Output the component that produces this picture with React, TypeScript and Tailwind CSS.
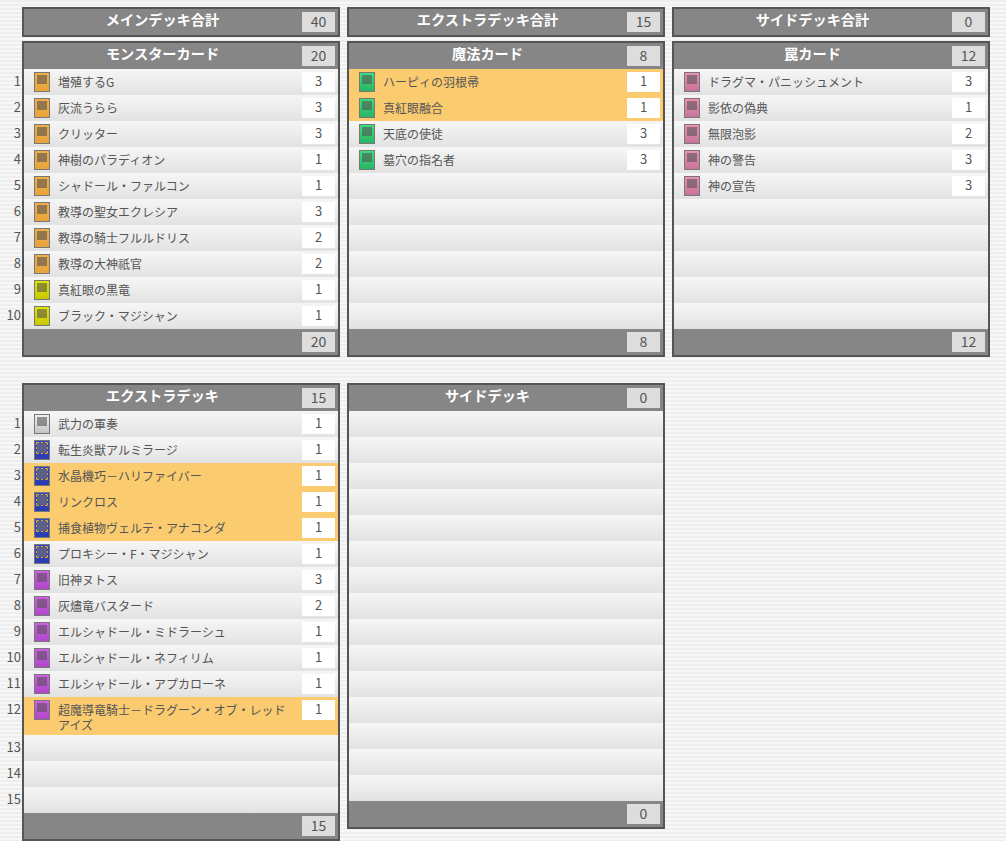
type CardKind = "effect" | "normal" | "spell" | "trap" | "token" | "link" | "fusion";

type Card = {
  name: string;
  count: number;
  kind: CardKind;
  limited?: boolean;
};

const kindStyles: Record<CardKind, string> = {
  effect: "bg-gradient-to-b from-[#f0ae48] to-[#e8a33c]",
  normal: "bg-gradient-to-b from-[#e4e400] to-[#c8c800]",
  spell: "bg-gradient-to-b from-[#3ddc7c] to-[#2ab565]",
  trap: "bg-gradient-to-b from-[#ee8fb4] to-[#c7749a]",
  token: "bg-gradient-to-b from-[#f2f2f2] to-[#c4c4c4]",
  link: "bg-gradient-to-b from-[#3548c4] to-[#2b3cae]",
  fusion: "bg-gradient-to-b from-[#cf5fe6] to-[#b048c8]",
};

const monsters: Card[] = [
  { name: "増殖するG", count: 3, kind: "effect" },
  { name: "灰流うらら", count: 3, kind: "effect" },
  { name: "クリッター", count: 3, kind: "effect" },
  { name: "神樹のパラディオン", count: 1, kind: "effect" },
  { name: "シャドール・ファルコン", count: 1, kind: "effect" },
  { name: "教導の聖女エクレシア", count: 3, kind: "effect" },
  { name: "教導の騎士フルルドリス", count: 2, kind: "effect" },
  { name: "教導の大神祇官", count: 2, kind: "effect" },
  { name: "真紅眼の黒竜", count: 1, kind: "normal" },
  { name: "ブラック・マジシャン", count: 1, kind: "normal" },
];

const spells: Card[] = [
  { name: "ハーピィの羽根帚", count: 1, kind: "spell", limited: true },
  { name: "真紅眼融合", count: 1, kind: "spell", limited: true },
  { name: "天底の使徒", count: 3, kind: "spell" },
  { name: "墓穴の指名者", count: 3, kind: "spell" },
];

const traps: Card[] = [
  { name: "ドラグマ・パニッシュメント", count: 3, kind: "trap" },
  { name: "影依の偽典", count: 1, kind: "trap" },
  { name: "無限泡影", count: 2, kind: "trap" },
  { name: "神の警告", count: 3, kind: "trap" },
  { name: "神の宣告", count: 3, kind: "trap" },
];

const extra: Card[] = [
  { name: "武力の軍奏", count: 1, kind: "token" },
  { name: "転生炎獣アルミラージ", count: 1, kind: "link" },
  { name: "水晶機巧－ハリファイバー", count: 1, kind: "link", limited: true },
  { name: "リンクロス", count: 1, kind: "link", limited: true },
  { name: "捕食植物ヴェルテ・アナコンダ", count: 1, kind: "link", limited: true },
  { name: "プロキシー・F・マジシャン", count: 1, kind: "link" },
  { name: "旧神ヌトス", count: 3, kind: "fusion" },
  { name: "灰燼竜バスタード", count: 2, kind: "fusion" },
  { name: "エルシャドール・ミドラーシュ", count: 1, kind: "fusion" },
  { name: "エルシャドール・ネフィリム", count: 1, kind: "fusion" },
  { name: "エルシャドール・アプカローネ", count: 1, kind: "fusion" },
  { name: "超魔導竜騎士－ドラグーン・オブ・レッドアイズ", count: 1, kind: "fusion", limited: true },
];

function CountBox({ value, dark }: { value: number; dark?: boolean }) {
  return (
    <div
      className={`mr-[3px] flex h-5 w-[33px] shrink-0 items-center justify-center pb-[2px] text-[#555] ${
        dark ? "bg-[#dddddd] text-[14px]" : "bg-white text-[13px]"
      }`}
    >
      {value}
    </div>
  );
}

function BarHeader({ title, total }: { title: string; total: number }) {
  return (
    <div className="flex h-[26px] items-center bg-[#868686]">
      <div className="flex-1 pb-1 pr-px text-center text-[14.2px] font-bold text-white">{title}</div>
      <CountBox value={total} dark />
    </div>
  );
}

function LinkFrame() {
  return (
    <svg width="12" height="12" viewBox="0 0 12 12" className="ml-[-1px] mt-[-1px] block">
      <rect x="1" y="1" width="10" height="10" fill="#5b6088" />
      <path
        d="M0.5 3V0.5H3M9 0.5H11.5V3M11.5 9V11.5H9M3 11.5H0.5V9M5 0.5H7M5 11.5H7M0.5 5V7M11.5 5V7"
        fill="none"
        stroke="#dca63a"
      />
    </svg>
  );
}

function CardIcon({ kind }: { kind: CardKind }) {
  return (
    <div className={`h-5 w-4 shrink-0 border border-[#777] pl-[2px] pt-[2px] ${kindStyles[kind]}`}>
      {kind === "link" ? <LinkFrame /> : <div className="h-[9px] w-[10px] bg-[#555]/60" />}
    </div>
  );
}

function Row({ index, card }: { index: number; card?: Card }) {
  return (
    <div
      className={`relative flex min-h-[26px] items-start ${
        card?.limited ? "bg-[#fbcb70]" : "bg-gradient-to-b from-[#f6f6f6] to-[#e2e2e2]"
      }`}
    >
      {index > 0 && (
        <div className="absolute right-full top-[4px] mr-[3px] text-[13px] leading-[15px] text-[#555]">
          {index}
        </div>
      )}
      {card && (
        <>
          <div className="ml-[10px] mt-[3px]">
            <CardIcon kind={card.kind} />
          </div>
          <div className="ml-2 flex-1 pb-[3px] pr-3 pt-[5px] text-[12px] leading-[15px] text-[#555]">
            {card.name}
          </div>
          <div className="mt-[3px]">
            <CountBox value={card.count} />
          </div>
        </>
      )}
    </div>
  );
}

function DeckPanel({
  title,
  total,
  cards,
  rowCount,
  numbered,
}: {
  title: string;
  total: number;
  cards: Card[];
  rowCount: number;
  numbered?: boolean;
}) {
  return (
    <div className="border-2 border-[#555]">
      <BarHeader title={title} total={total} />
      {Array.from({ length: rowCount }, (_, i) => (
        <Row key={i} index={numbered ? i + 1 : 0} card={cards[i]} />
      ))}
      <div className="flex h-[26px] items-center justify-end bg-[#868686]">
        <CountBox value={total} dark />
      </div>
    </div>
  );
}

function TotalBar({ title, total }: { title: string; total: number }) {
  return (
    <div className="border-2 border-[#555]">
      <BarHeader title={title} total={total} />
    </div>
  );
}

export default function App() {
  return (
    <div
      className="h-[841px] overflow-hidden bg-[repeating-linear-gradient(180deg,#eeeeee_0,#eeeeee_2px,#f7f7f7_2px,#f7f7f7_4px)] pl-[22px] pt-[7px]"
      style={{ fontFamily: '"Noto Sans CJK JP", "Noto Sans", sans-serif' }}
    >
      <div className="grid grid-cols-[318px_318px_318px] items-start gap-x-[7px]">
        <TotalBar title="メインデッキ合計" total={40} />
        <TotalBar title="エクストラデッキ合計" total={15} />
        <TotalBar title="サイドデッキ合計" total={0} />
        <div className="col-span-3 grid grid-cols-[318px_318px_318px] items-start gap-x-[7px] pt-1">
          <DeckPanel title="モンスターカード" total={20} cards={monsters} rowCount={10} numbered />
          <DeckPanel title="魔法カード" total={8} cards={spells} rowCount={10} />
          <DeckPanel title="罠カード" total={12} cards={traps} rowCount={10} />
        </div>
        <div className="col-span-3 grid grid-cols-[318px_318px_318px] items-start gap-x-[7px] pt-[26px]">
          <DeckPanel title="エクストラデッキ" total={15} cards={extra} rowCount={15} numbered />
          <DeckPanel title="サイドデッキ" total={0} cards={[]} rowCount={15} />
        </div>
      </div>
    </div>
  );
}
